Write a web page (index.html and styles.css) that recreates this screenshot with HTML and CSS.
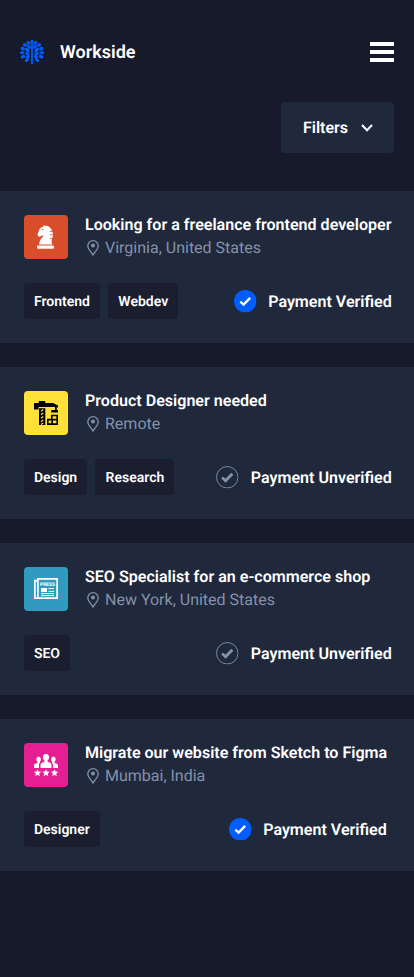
FILE: index.html
```html
<!DOCTYPE html>
<html lang="en">
<head>
<meta charset="utf-8">
<meta name="viewport" content="width=device-width, initial-scale=1">
<title>Workside</title>
<link rel="stylesheet" href="styles.css">
</head>
<body>
<svg class="sprite" aria-hidden="true">
  <symbol id="pin" viewBox="0 0 12 16"><path d="M6 15C4.500 12.300.8 9 .8 5.900a5.200 5.200 0 0 1 10.400 0C11.200 9 7.500 12.300 6 15z" fill="none" stroke="currentColor" stroke-width="1.300"/><circle cx="6" cy="5.500" r="2" fill="currentColor"/></symbol>
  <symbol id="verified" viewBox="0 0 22 22"><circle cx="11" cy="11" r="11" fill="#005dff"/><path d="M6.200 11.300l3.200 3 6.400-6.600" fill="none" stroke="#fff" stroke-width="2.300"/></symbol>
  <symbol id="unverified" viewBox="0 0 22 22"><circle cx="11" cy="11" r="10.500" fill="none" stroke="#8491a9" stroke-width=".9"/><path d="M6 11.300l3.400 3.100 6.600-6.800" fill="none" stroke="#8491a9" stroke-width="2.800"/></symbol>
</svg>
<header class="header">
  <a class="brand">
    <svg class="logo" viewBox="0 0 24 24" fill="#005dff">
      <path d="M11.100 3h1.800v21h-1.800z"/>
      <ellipse cx="12" cy="1.900" rx="1.700" ry="2"/>
      <g id="leaves">
        <ellipse cx="8.400" cy="2.900" rx="2.100" ry="1.500" transform="rotate(40 8.400 2.900)"/>
        <ellipse cx="5" cy="5" rx="2.200" ry="1.600" transform="rotate(20 5 5)"/>
        <ellipse cx="9.100" cy="6.700" rx="2.300" ry="1.600" transform="rotate(50 9.100 6.700)"/>
        <ellipse cx="2.800" cy="8.700" rx="2.200" ry="1.700" transform="rotate(20 2.800 8.700)"/>
        <ellipse cx="7.300" cy="10" rx="2.600" ry="1.700" transform="rotate(35 7.300 10)"/>
        <ellipse cx="2.200" cy="12.700" rx="2.200" ry="1.600"/>
        <ellipse cx="7.300" cy="13.500" rx="2.400" ry="1.500"/>
        <ellipse cx="3" cy="16.700" rx="2.300" ry="1.700" transform="rotate(-25 3 16.700)"/>
        <ellipse cx="7.900" cy="16.700" rx="2.300" ry="1.500" transform="rotate(-35 7.900 16.700)"/>
        <ellipse cx="7" cy="20" rx="2.400" ry="1.500" transform="rotate(-35 7 20)"/>
      </g>
      <use href="#leaves" transform="matrix(-1 0 0 1 24 0)"/>
    </svg>
    <span>Workside</span>
  </a>
  <div class="menu"><i></i><i></i><i></i></div>
</header>
<div class="toolbar">
  <div class="filters"><span>Filters</span><svg width="12" height="8" viewBox="0 0 12 8"><path d="M1 1l5 5.200L11 1" fill="none" stroke="#fff" stroke-width="2"/></svg></div>
</div>
<main class="jobs">
  <article class="card">
    <div class="job">
      <div class="tile orange"><svg viewBox="0 0 24 24" fill="#fff"><path d="M9.300 0l1.300.8C14 .4 17.300 2.500 18 6h-2.200v.8h2.700c.3.900.4 1.700.4 2.700h-3v.8h3c0 1-.2 1.800-.5 2.700h-2.700v.8h2.400c-.6 1.800-.7 3.500.2 5.700H5.300c-.2-3.700 1.300-5.500 4.500-8.700l-1.600-.3-2.500 1.300-1.200-.3-1-1.800C4 7.500 5 6.500 5.300 4.500 5.800 3 7.500 2 9.600 1.700z"/><rect x="3" y="20.500" width="17" height="3.300" rx="1.200"/><circle cx="8.600" cy="4.500" r=".8" fill="#d94e2a"/></svg></div>
      <div class="info"><h2>Looking for a freelance frontend developer</h2><p><svg><use href="#pin"/></svg>Virginia, United States</p></div>
    </div>
    <div class="meta"><div class="tags"><span>Frontend</span><span>Webdev</span></div><div class="payment"><svg><use href="#verified"/></svg>Payment Verified</div></div>
  </article>
  <article class="card">
    <div class="job">
      <div class="tile yellow"><svg viewBox="0 0 24 24"><path d="M0 2h4.800V0h6.400v2H19l5 2.500v2h-1.200V9H24v2.600h-6.700V9H21V6H4.500v2.600H0zM5 7.300h6.300V24H5zM17 13.700h7V24H13v-6.300h4z"/><path d="M7 10.300l2.300-1.800M7 13.800L9.300 12M7 17.300l2.300-1.800M7 20.800L9.300 19M7 23.500l2.300-1.500" stroke="#ffe137" stroke-width="1.100"/><path d="M18.600 15.200h3.800v2.500h-3.800zM14.600 19.500h2.700v2.800h-2.700zM19 19.500h3.400v2.800H19z" fill="#ffe137"/></svg></div>
      <div class="info"><h2>Product Designer needed</h2><p><svg><use href="#pin"/></svg>Remote</p></div>
    </div>
    <div class="meta"><div class="tags"><span>Design</span><span>Research</span></div><div class="payment"><svg><use href="#unverified"/></svg>Payment Unverified</div></div>
  </article>
  <article class="card">
    <div class="job">
      <div class="tile teal"><svg viewBox="0 0 24 24" fill="none" stroke="#fff" stroke-width="1.700"><path d="M3.900 1.900h19.200v19.200H3.900zM3.900 3.600H.9v17.500h3"/><text class="press" x="13.500" y="8.600" text-anchor="middle">PRESS</text><path d="M7 11h6v4H7z" fill="#fff" stroke="none"/><path d="M14.500 11.500h5.500M14.500 14.300h5.500M7 16.600h13M7 18.600h13" stroke-width="1"/></svg></div>
      <div class="info"><h2>SEO Specialist for an e-commerce shop</h2><p><svg><use href="#pin"/></svg>New York, United States</p></div>
    </div>
    <div class="meta"><div class="tags"><span>SEO</span></div><div class="payment"><svg><use href="#unverified"/></svg>Payment Unverified</div></div>
  </article>
  <article class="card compact">
    <div class="job">
      <div class="tile pink"><svg viewBox="0 0 24 24" fill="#fff"><path d="M6.500 15V12c0-1.500 1-2.200 3-2.700l1-.5V7.500C9 6.500 8.700 4.500 9 3.500c.4-2 1.500-2.500 3-2.500s2.600.5 3 2.500c.3 1 0 3-1.500 4v1.300l1 .5c2 .5 3 1.200 3 2.700v3z"/><path id="member" d="M0 15v-2.500C0 11 1 10.700 3.500 10V9C2.500 8 2.200 6.500 2.400 5.700 2.700 4.200 3.500 3.700 4.600 3.700s1.900.5 2.200 2C7 6.500 6.700 8 5.900 9v1c-.7.500-.9 1-.9 2v3z"/><use href="#member" transform="matrix(-1 0 0 1 24 0)"/><path id="star" d="M3.500 16.300l1 2.300 2.700.2-2 1.700.6 2.700-2.300-1.400-2.300 1.400.6-2.700-2-1.700 2.700-.2z"/><use href="#star" x="8.500"/><use href="#star" x="17"/></svg></div>
      <div class="info"><h2>Migrate our website from Sketch to Figma</h2><p><svg><use href="#pin"/></svg>Mumbai, India</p></div>
    </div>
    <div class="meta"><div class="tags"><span>Designer</span></div><div class="payment"><svg><use href="#verified"/></svg>Payment Verified</div></div>
  </article>
</main>
</body>
</html>
```
FILE: styles.css
```css
* { box-sizing: border-box; }
body { margin: 0; min-height: 977px; background: #171a2a; color: #fff; font: 640 16px/23px Roboto, sans-serif; text-rendering: geometricPrecision; }
.sprite { display: none; }
.header { display: flex; justify-content: space-between; align-items: center; height: 102px; padding: 2px 20px 0; }
.brand { display: flex; align-items: center; gap: 16px; font-size: 18px; }
.logo { width: 24px; height: 24px; }
.menu { display: grid; gap: 4px; width: 24px; }
.menu i { height: 4px; background: #fff; }
.toolbar { display: flex; justify-content: flex-end; padding: 0 20px; }
.filters { display: flex; align-items: center; justify-content: space-between; width: 113px; height: 51px; padding: 0 21px 0 22px; border-radius: 4px; background: #20283c; }
.jobs { display: grid; gap: 24px; padding-top: 38px; }
.card { height: 152px; padding: 24px 22px 24px 24px; background: #20283c; }
.card.compact { padding-right: 27px; }
.job { display: flex; gap: 17px; height: 44px; }
.tile { display: grid; place-items: center; flex: none; width: 44px; height: 44px; border-radius: 4px; }
.tile svg { width: 24px; height: 24px; }
.orange { background: #d94e2a; }
.yellow { background: #ffe137; }
.teal { background: #309bbf; }
.pink { background: #e61e94; }
.press { font: 800 4.8px Roboto, sans-serif; fill: #fff; stroke: none; }
.info { margin-top: -2px; white-space: nowrap; }
h2 { margin: 0; font: inherit; font-size: 16.07px; }
p { display: flex; align-items: center; gap: 6px; margin: 0; color: #8491a9; font-weight: 400; }
p svg { width: 12px; height: 16px; margin-left: 2px; }
.meta { display: flex; align-items: center; justify-content: space-between; margin-top: 24px; }
.tags { display: flex; gap: 8px; margin-left: -.3px; }
.tags span { height: 36px; padding: 0 10.2px; border-radius: 4px; background: #1a1e2f; font-size: 14px; line-height: 38px; }
.payment { display: flex; align-items: center; gap: 12px; margin-right: .4px; font-size: 16.07px; white-space: nowrap; }
.payment svg { width: 22.5px; height: 22.5px; overflow: visible; }
```
